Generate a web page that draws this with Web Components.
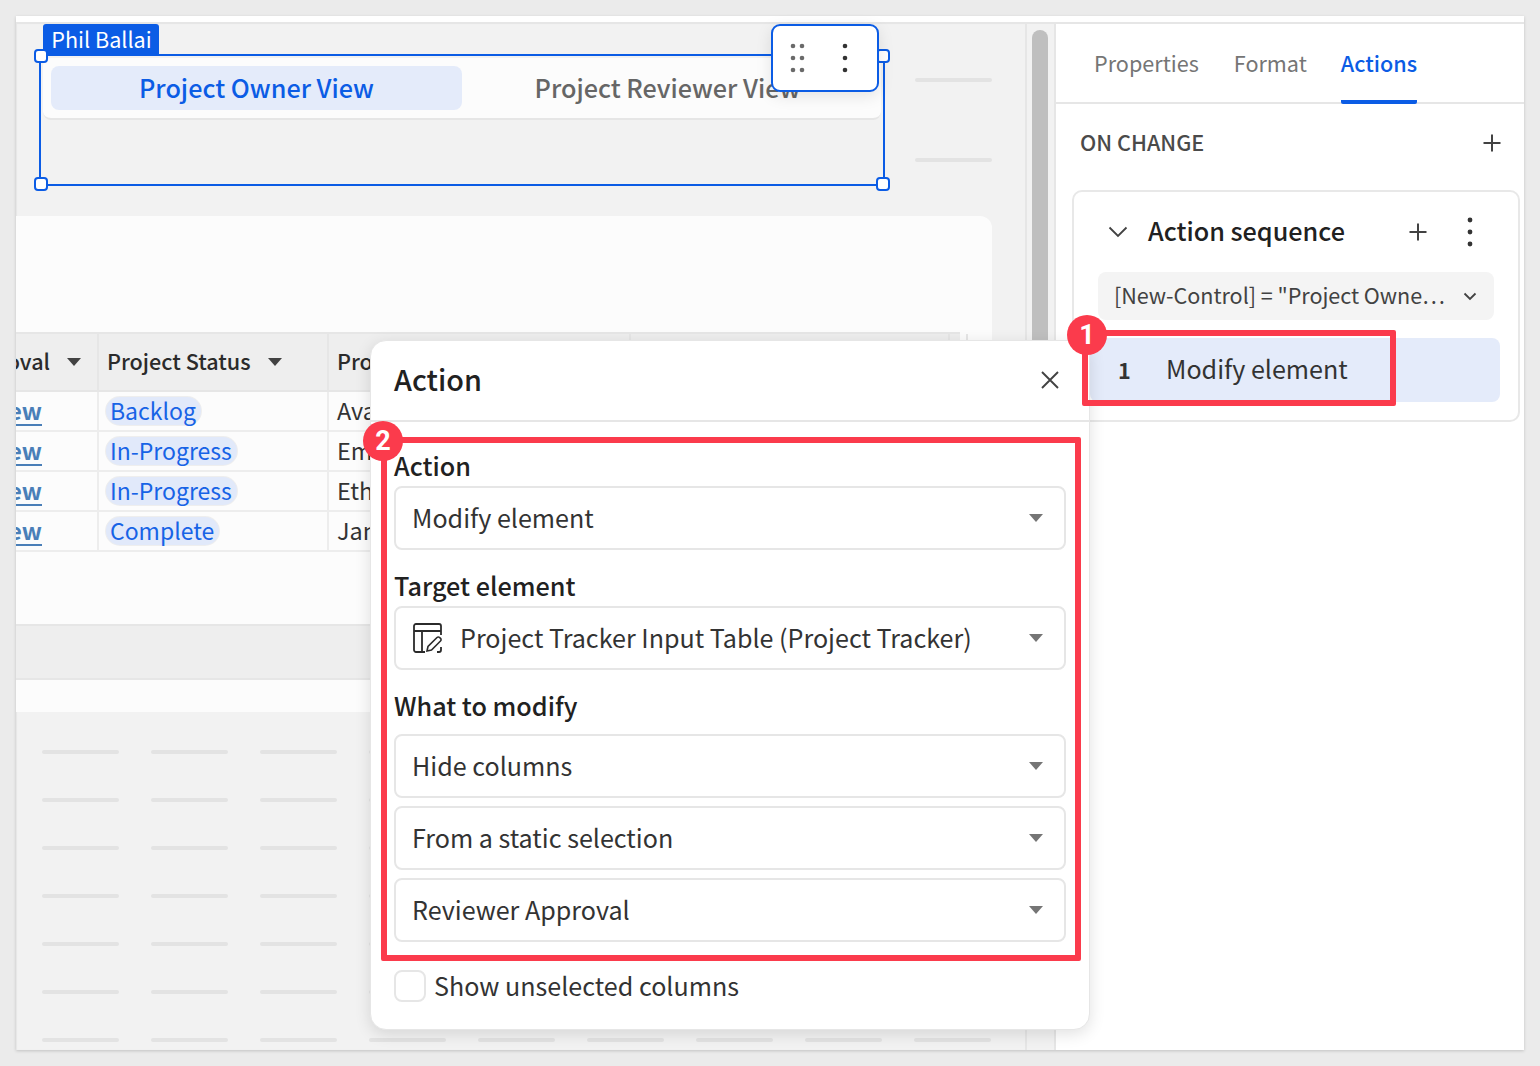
<!DOCTYPE html>
<html><head><meta charset="utf-8"><title>Action</title>
<style>
html,body{margin:0;padding:0;background:#ebebeb}
body{font-family:"Noto Sans CJK JP","Noto Sans",sans-serif;color:#212121;width:1540px;height:1066px;overflow:hidden}
</style></head><body>
<x-app></x-app>
<script>
function def(name,html,init){customElements.define(name,class extends HTMLElement{constructor(){super();const r=this.attachShadow({mode:'open'});r.innerHTML=typeof html==='function'?html(this):html;}connectedCallback(){if(init)init(this);}});}
const caret=`<svg width="14" height="8" viewBox="0 0 14 8"><path d="M0 0h14L7 8z" fill="currentColor"/></svg>`;
const plus=`<svg width="20" height="20" viewBox="0 0 20 20"><path d="M10 1.500v17M1.500 10h17" stroke="#424242" stroke-width="2" fill="none"/></svg>`;
const kebab=`<svg width="6" height="30" viewBox="0 0 6 30"><circle cx="3" cy="3" r="2.400" fill="#333"/><circle cx="3" cy="15" r="2.400" fill="#333"/><circle cx="3" cy="27" r="2.400" fill="#333"/></svg>`;

def('x-select',()=>`<style>
:host{display:flex;align-items:center;height:64px;box-sizing:border-box;border:2px solid #e6e6e6;border-radius:8px;padding:0 21px 0 16px;font-size:25.1px;color:#333;background:#fff}
.t{flex:1;display:flex;align-items:center;gap:17px;white-space:nowrap;line-height:1}
.c{color:#757575;display:flex}
::slotted(svg){margin-left:1px}
</style><div class="t"><slot name="icon"></slot><slot></slot></div><div class="c">${caret}</div>`);

def('x-line',`<style>:host{display:block;width:77px;height:4px;border-radius:2px;background:#e3e3e3}</style>`);

def('x-lines',`<style>:host{display:grid;grid-template-columns:repeat(9,77px);grid-auto-rows:4px;align-content:start;column-gap:32px;row-gap:44px;padding:38px 0 0 26px;height:338px;overflow:hidden;box-sizing:border-box}</style><slot></slot>`,
 el=>{if(!el.children.length){for(let i=0;i<63;i++)el.appendChild(document.createElement('x-line'));}});

def('x-tabs-control',`<style>
:host{display:flex;box-sizing:border-box;width:838px;height:62px;padding:8px;background:#fcfcfc;border-radius:8px;border-bottom:2px solid #e6e6e6;font-size:25.2px;font-weight:500}
div{flex:1;display:flex;align-items:center;justify-content:center;border-radius:8px;height:44px;color:#666;line-height:1}
.a{background:#e4ebfa;color:#0b5ce5}
</style><div class="a">Project Owner View</div><div>Project Reviewer View</div>`);

def('x-pill',`<style>:host{display:inline-block;height:28px;line-height:26px;padding:0 5px 0 4px;border-radius:14px;background:#e1e9fa;box-shadow:0 0 0 1px #eeeeee;color:#1763e6;font-size:23px;white-space:nowrap}</style><slot></slot>`);

const COLS='83px 230px 302px 319px 10px';
def('x-row',`<style>
:host{display:grid;grid-template-columns:${COLS};height:40px;box-sizing:border-box;border-bottom:2px solid #ededed;font-size:23.4px;color:#333;background:#fcfcfc}
</style><slot></slot>`);
def('x-cell',`<style>
:host{display:flex;align-items:center;box-sizing:border-box;padding:0 7px;border-right:2px solid #ededed;white-space:nowrap;overflow:hidden;line-height:1}
:host(.lnk){justify-content:flex-end;padding:0 55px 0 0;color:#4a7fb8;font-weight:600;text-decoration:underline;text-underline-offset:4px;text-decoration-thickness:2px}
:host(.nm){padding:0 8px}
</style><slot></slot>`);

const row=(s,n)=>`<x-row><x-cell class="lnk">View</x-cell><x-cell><x-pill>${s}</x-pill></x-cell><x-cell class="nm">${n}</x-cell><x-cell></x-cell><x-cell></x-cell></x-row>`;
def('x-table',`<style>
:host{display:block;width:944px}
.h{display:grid;grid-template-columns:${COLS};height:60px;box-sizing:border-box;background:#eeeeee;border-top:2px solid #e6e6e6;border-bottom:2px solid #e6e6e6;font-weight:500;font-size:21.6px;color:#2b2b2b}
.cap{display:flex;color:#424242;margin-left:17px;flex:none;position:relative;top:1px}
.hc{display:flex;align-items:center;padding:0 8px 2px;border-right:2px solid #e6e6e6;white-space:nowrap;overflow:hidden;box-sizing:border-box;line-height:1}
.first{justify-content:flex-end;padding:0 16px 2px 0}
</style>
<div class="h">
 <div class="hc first"><span>Reviewer Approval</span><span class="cap">${caret}</span></div>
 <div class="hc">Project Status<span class="cap">${caret}</span></div>
 <div class="hc">Project Owner</div><div class="hc"></div><div class="hc"></div>
</div>
${row('Backlog','Ava')}${row('In-Progress','Emma')}${row('In-Progress','Ethan')}${row('Complete','Jane')}`);

def('x-card',`<style>
:host{display:block;width:976px;height:496px;background:#fcfcfc;border-radius:0 12px 0 0;box-sizing:border-box;padding-top:116px}
.band{height:56px;margin-top:72px;box-sizing:border-box;background:#eeeeee;border-top:2px solid #e6e6e6;border-bottom:2px solid #e6e6e6}
</style><x-table></x-table><div class="band"></div>`);

def('x-canvas',`<style>
:host{display:block;position:relative;width:1009px;height:1026px;background:#f2f2f2;overflow:hidden;box-shadow:inset 1px 0 1px #e6e6e6}
.top{height:192px;box-sizing:border-box;padding:34px 0 0 27px;display:flex}
.mini{margin-left:34px;display:flex;flex-direction:column;gap:76px;padding-top:20px}
</style>
<div class="top"><x-tabs-control></x-tabs-control><div class="mini"><x-line></x-line><x-line></x-line></div></div>
<x-card></x-card>
<x-lines></x-lines>`);

def('x-panel',()=>`<style>
:host{display:block;width:468px;background:#fff;font-size:21.6px}
.tabs{display:flex;gap:35px;height:80px;box-sizing:border-box;padding:0 0 0 38px;border-bottom:2px solid #e6e6e6;color:#757575;align-items:flex-start}
.tabs span{display:block;height:80px;box-sizing:border-box;padding-top:23px;line-height:32px}
.tabs .a{color:#0b5ce5;font-weight:500;border-bottom:4px solid #0b5ce5;border-radius:0 0 2px 2px;margin-left:-1px}
.oc{display:flex;justify-content:space-between;align-items:center;height:78px;padding:0 22px 0 24px;font-weight:500;color:#4a4a4a}
.oc span{position:relative;top:-2px}
.oc svg{display:block}
.seq{box-sizing:border-box;margin:8px 4px 0 16px;height:232px;border:2px solid #e8e8e8;border-radius:10px}
.sh{display:flex;align-items:center;height:79px;padding:0 0 0 34px;font-size:25.2px;font-weight:500;color:#212121}
.sh .chev{margin-right:20px;display:flex}
.sh .nm{flex:1;line-height:1;margin-top:-2px}
.sh .pl{margin-right:39px;display:flex}
.sh .kb{margin-right:45px;display:flex}
.cond{box-sizing:border-box;margin:1px 24px 0 24px;height:48px;background:#f4f4f4;border-radius:8px;display:flex;align-items:center;padding:0 17px 0 16px;color:#424242;font-size:21.6px;letter-spacing:-.05px;justify-content:space-between;white-space:nowrap;line-height:1}
.cond span{margin-top:-2px}
.item{box-sizing:border-box;margin:18px 18px 0 16px;height:64px;background:#e4ebfa;border-radius:8px;display:flex;align-items:center;padding:0 0 0 28px;font-size:25.1px;color:#333;line-height:1}
.item span{margin-top:-2px}
.item b{font-weight:700;font-size:21.6px;width:48px;color:#333}
</style>
<div class="tabs"><span>Properties</span><span>Format</span><span class="a">Actions</span></div>
<div class="oc"><span>ON CHANGE</span>${plus}</div>
<div class="seq">
 <div class="sh"><span class="chev"><svg width="20" height="12" viewBox="0 0 20 12"><path d="M1.500 1.500 10 10l8.500-8.500" stroke="#424242" stroke-width="1.800" fill="none"/></svg></span><span class="nm">Action sequence</span><span class="pl">${plus}</span><span class="kb">${kebab}</span></div>
 <div class="cond"><span>[New-Control] = "Project Owne…</span><svg width="14" height="9" viewBox="0 0 14 9"><path d="M1.500 1.500 7 7l5.500-5.500" stroke="#424242" stroke-width="1.800" fill="none"/></svg></div>
 <div class="item"><b>1</b><span>Modify element</span></div>
</div>`);

def('x-field',`<style>
:host{display:block}
.l{font-size:25.2px;font-weight:500;color:#212121;line-height:38px;height:40px}
::slotted(x-select){margin-bottom:8px}
</style><div class="l"></div><slot></slot>`,el=>{el.shadowRoot.querySelector('.l').textContent=el.getAttribute('label');});

def('x-modal',`<style>
:host{display:block;position:absolute;left:354px;top:324px;width:720px;height:690px;box-sizing:border-box;background:#fff;border-radius:16px;border:1px solid #e6e6e6;box-shadow:0 4px 16px rgba(0,0,0,.12);z-index:5}
.h{display:flex;align-items:center;justify-content:space-between;height:81px;box-sizing:border-box;padding:0 29px 2px 23px;border-bottom:2px solid #e6e6e6;font-size:28.8px;font-weight:500;line-height:1}
.b{padding:24px 23px 0 23px;display:flex;flex-direction:column}
.c{display:flex;align-items:center;gap:8px;font-size:25.1px;color:#333;line-height:1}
.box{width:32px;height:32px;box-sizing:border-box;border:2px solid #e6e6e6;border-radius:8px}
svg{display:block}
</style>
<div class="h"><span>Action</span><svg width="20" height="20" viewBox="0 0 20 20"><path d="M2 2l16 16M18 2 2 18" stroke="#424242" stroke-width="1.900" fill="none"/></svg></div>
<div class="b">
 <x-field label="Action"><x-select>Modify element</x-select></x-field>
 <div style="height:8px"></div>
 <x-field label="Target element"><x-select><svg slot="icon" width="30" height="30" viewBox="0 0 30 30" fill="none" stroke="#2b2b2b" stroke-width="1.800"><path d="M12 29H3a2 2 0 0 1-2-2V3a2 2 0 0 1 2-2h23a2 2 0 0 1 2 2v9M1 8h27M9 8v21"/><path d="M24 29h2a2 2 0 0 0 2-2v-3"/><path d="M14 28l1-4.500L24 14.500a1.800 1.800 0 0 1 2.600 0l.9.9a1.800 1.800 0 0 1 0 2.600L18.500 27z" stroke-width="1.600"/></svg>Project Tracker Input Table (Project Tracker)</x-select></x-field>
 <div style="height:8px"></div>
 <x-field label="What to modify"><x-select style="margin-top:8px">Hide columns</x-select><x-select>From a static selection</x-select><x-select>Reviewer Approval</x-select></x-field>
 <div style="height:20px"></div>
 <div class="c"><div class="box"></div><span>Show unselected columns</span></div>
</div>`);

def('x-select-frame',`<style>
:host{display:block;position:absolute;inset:0;pointer-events:none;z-index:3}
.r{position:absolute;left:23px;top:38px;width:846px;height:132px;box-sizing:border-box;border:2px solid #0b5ce5}
.tag{position:absolute;left:27px;top:8px;width:116px;height:30px;background:#0b5ce5;color:#fff;border-radius:3px 3px 0 0;font-size:21.6px;line-height:30px;text-align:center;white-space:nowrap;padding-left:1px;box-sizing:border-box}
.d{position:absolute;width:14px;height:14px;box-sizing:border-box;background:#fff;border:2px solid #0b5ce5;border-radius:4px}
.bar{position:absolute;left:755px;top:8px;width:108px;height:68px;box-sizing:border-box;background:#fff;border:2px solid #0b5ce5;border-radius:9px;box-shadow:0 4px 16px rgba(0,0,0,.1);display:flex;align-items:center;justify-content:space-between;padding:0 29px 0 17px}
</style>
<div class="tag">Phil Ballai</div><div class="r"></div>
<div class="d" style="left:18px;top:33px"></div><div class="d" style="left:18px;top:161px"></div><div class="d" style="left:860px;top:33px"></div><div class="d" style="left:860px;top:161px"></div>
<div class="bar">
<svg width="15" height="30" viewBox="0 0 15 30" fill="#6a6a6a"><circle cx="3" cy="3" r="2.300"/><circle cx="12" cy="3" r="2.300"/><circle cx="3" cy="15" r="2.300"/><circle cx="12" cy="15" r="2.300"/><circle cx="3" cy="27" r="2.300"/><circle cx="12" cy="27" r="2.300"/></svg>
<svg width="6" height="30" viewBox="0 0 6 30" fill="#333"><circle cx="3" cy="3" r="2.300"/><circle cx="3" cy="15" r="2.300"/><circle cx="3" cy="27" r="2.300"/></svg>
</div>`);

def('x-mark',`<style>
:host{display:block;position:absolute;box-sizing:border-box;border:6px solid #fb3b4c;border-radius:2px;z-index:6;pointer-events:none}
b{position:absolute;width:40px;height:40px;border-radius:50%;background:#fb3b4c;color:#fff;font:700 27px/40px Roboto,"Liberation Sans",sans-serif;text-align:center}
</style><b></b>`,el=>{const b=el.shadowRoot.querySelector('b');b.textContent=el.getAttribute('n');b.style.left=el.getAttribute('bx')+'px';b.style.top=el.getAttribute('by')+'px';});

def('x-app',`<style>
:host{display:block;position:absolute;left:16px;top:16px;width:1508px;height:1034px;background:#fff;box-shadow:0 1px 3px rgba(0,0,0,.18)}
.strip{height:8px;box-sizing:border-box;background:#fff;border-bottom:2px solid #e6e6e6}
.main{display:flex;height:1026px;overflow:hidden}
.scroll{width:31px;box-sizing:border-box;background:#f2f2f2;border-left:2px solid #e6e6e6;border-right:2px solid #e6e6e6;padding:6px 5px 0}
.thumb{width:16px;height:600px;border-radius:8px 8px 0 0;background:#bfbfbf}
</style>
<div class="strip"></div>
<div class="main"><x-canvas></x-canvas><div class="scroll"><div class="thumb"></div></div><x-panel></x-panel></div>
<x-select-frame></x-select-frame>
<x-modal></x-modal>
<x-mark n="1" bx="-21" by="-21" style="left:1066px;top:314px;width:314px;height:76px"></x-mark>
<x-mark n="2" bx="-24" by="-22" style="left:365px;top:421px;width:700px;height:524px"></x-mark>`);
</script>
</body></html>
